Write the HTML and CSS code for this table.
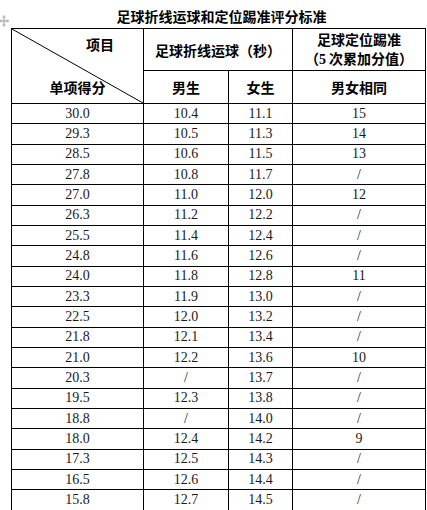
FILE: index.html
```html
<!DOCTYPE html>
<html lang="zh">
<head>
<meta charset="utf-8">
<link rel="stylesheet" href="styles.css">
</head>
<body>
<div class="page">
  <svg class="handle" viewBox="0 0 10 12" width="10" height="12">
    <path d="M5 1 V11 M0 6 H10" stroke="#b5b5b5" stroke-width="1.4" fill="none"/>
    <path d="M5 0 L3 2.5 H7 Z M5 12 L3 9.5 H7 Z M10 6 L7.5 4 V8 Z M0 6 L2.5 4 V8 Z" fill="#b5b5b5"/>
  </svg>
  <div class="title">足球折线运球和定位踢准评分标准</div>
  <table class="score">
    <colgroup><col class="c1"><col class="c2"><col class="c3"><col class="c4"></colgroup>
    <thead>
      <tr class="h1">
        <th rowspan="2" class="diag">
          <svg class="diag-line" viewBox="0 0 100 100" preserveAspectRatio="none"><line x1="0" y1="0" x2="100" y2="100" stroke="#000" stroke-width="1" vector-effect="non-scaling-stroke"/></svg>
          <div class="diag-box"><span class="d-top">项目</span><span class="d-bot">单项得分</span></div>
        </th>
        <th colspan="2">足球折线运球（秒）</th>
        <th class="two">足球定位踢准<br>（<span class="num">5</span> 次累加分值）</th>
      </tr>
      <tr class="h2"><th>男生</th><th>女生</th><th>男女相同</th></tr>
    </thead>
    <tbody>
      <tr><td>30.0</td><td>10.4</td><td>11.1</td><td>15</td></tr>
      <tr><td>29.3</td><td>10.5</td><td>11.3</td><td>14</td></tr>
      <tr><td>28.5</td><td>10.6</td><td>11.5</td><td>13</td></tr>
      <tr><td>27.8</td><td>10.8</td><td>11.7</td><td>/</td></tr>
      <tr><td>27.0</td><td>11.0</td><td>12.0</td><td>12</td></tr>
      <tr><td>26.3</td><td>11.2</td><td>12.2</td><td>/</td></tr>
      <tr><td>25.5</td><td>11.4</td><td>12.4</td><td>/</td></tr>
      <tr><td>24.8</td><td>11.6</td><td>12.6</td><td>/</td></tr>
      <tr><td>24.0</td><td>11.8</td><td>12.8</td><td>11</td></tr>
      <tr><td>23.3</td><td>11.9</td><td>13.0</td><td>/</td></tr>
      <tr><td>22.5</td><td>12.0</td><td>13.2</td><td>/</td></tr>
      <tr><td>21.8</td><td>12.1</td><td>13.4</td><td>/</td></tr>
      <tr><td>21.0</td><td>12.2</td><td>13.6</td><td>10</td></tr>
      <tr><td>20.3</td><td>/</td><td>13.7</td><td>/</td></tr>
      <tr><td>19.5</td><td>12.3</td><td>13.8</td><td>/</td></tr>
      <tr><td>18.8</td><td>/</td><td>14.0</td><td>/</td></tr>
      <tr><td>18.0</td><td>12.4</td><td>14.2</td><td>9</td></tr>
      <tr><td>17.3</td><td>12.5</td><td>14.3</td><td>/</td></tr>
      <tr><td>16.5</td><td>12.6</td><td>14.4</td><td>/</td></tr>
      <tr><td>15.8</td><td>12.7</td><td>14.5</td><td>/</td></tr>
    </tbody>
  </table>
</div>
</body>
</html>
```

FILE: styles.css
```css
html, body {
  margin: 0;
  padding: 0;
  background: #fff;
}
.page {
  position: relative;
  width: 427px;
  height: 510px;
  overflow: hidden;
  padding-left: 11px;
  box-sizing: border-box;
}
.handle {
  position: absolute;
  left: -1px;
  top: 15px;
}
.title {
  width: 415px;
  text-align: center;
  font-family: "Noto Sans CJK SC", sans-serif;
  font-weight: 700;
  font-size: 14px;
  line-height: 23px;
  padding-top: 5px;
  height: 23px;
  color: #000;
  padding-left: 3px;
  box-sizing: content-box;
}
.score {
  border-collapse: collapse;
  table-layout: fixed;
  width: 415px;
  margin-left: 0;
}
.c1 { width: 132px; }
.c2 { width: 85px; }
.c3 { width: 64px; }
.c4 { width: 133px; }
.score th,
.score td {
  border: 1px solid #000;
  padding: 0;
  text-align: center;
  vertical-align: middle;
}
.score th {
  font-family: "Noto Sans CJK SC", sans-serif;
  font-weight: 700;
  font-size: 14px;
  color: #000;
}
.h1 { height: 42px; }
.h2 { height: 33px; }
.two { line-height: 19px; }
.num {
  font-family: "Liberation Serif", serif;
}
.diag {
  position: relative;
}
.diag-line {
  position: absolute;
  left: 0;
  top: 0;
  width: 100%;
  height: 100%;
}
.diag-box {
  height: 74px;
  display: flex;
  flex-direction: column;
  justify-content: space-between;
}
.d-top {
  align-self: flex-end;
  margin-right: 29px;
  margin-top: 5px;
  line-height: 20px;
}
.d-bot {
  align-self: center;
  margin-bottom: 6px;
  line-height: 20px;
}
.score tbody tr {
  height: 20.33px;
}
.score td {
  font-family: "Liberation Serif", serif;
  font-size: 14px;
  line-height: 18px;
  color: #1a1a1a;
}
```
